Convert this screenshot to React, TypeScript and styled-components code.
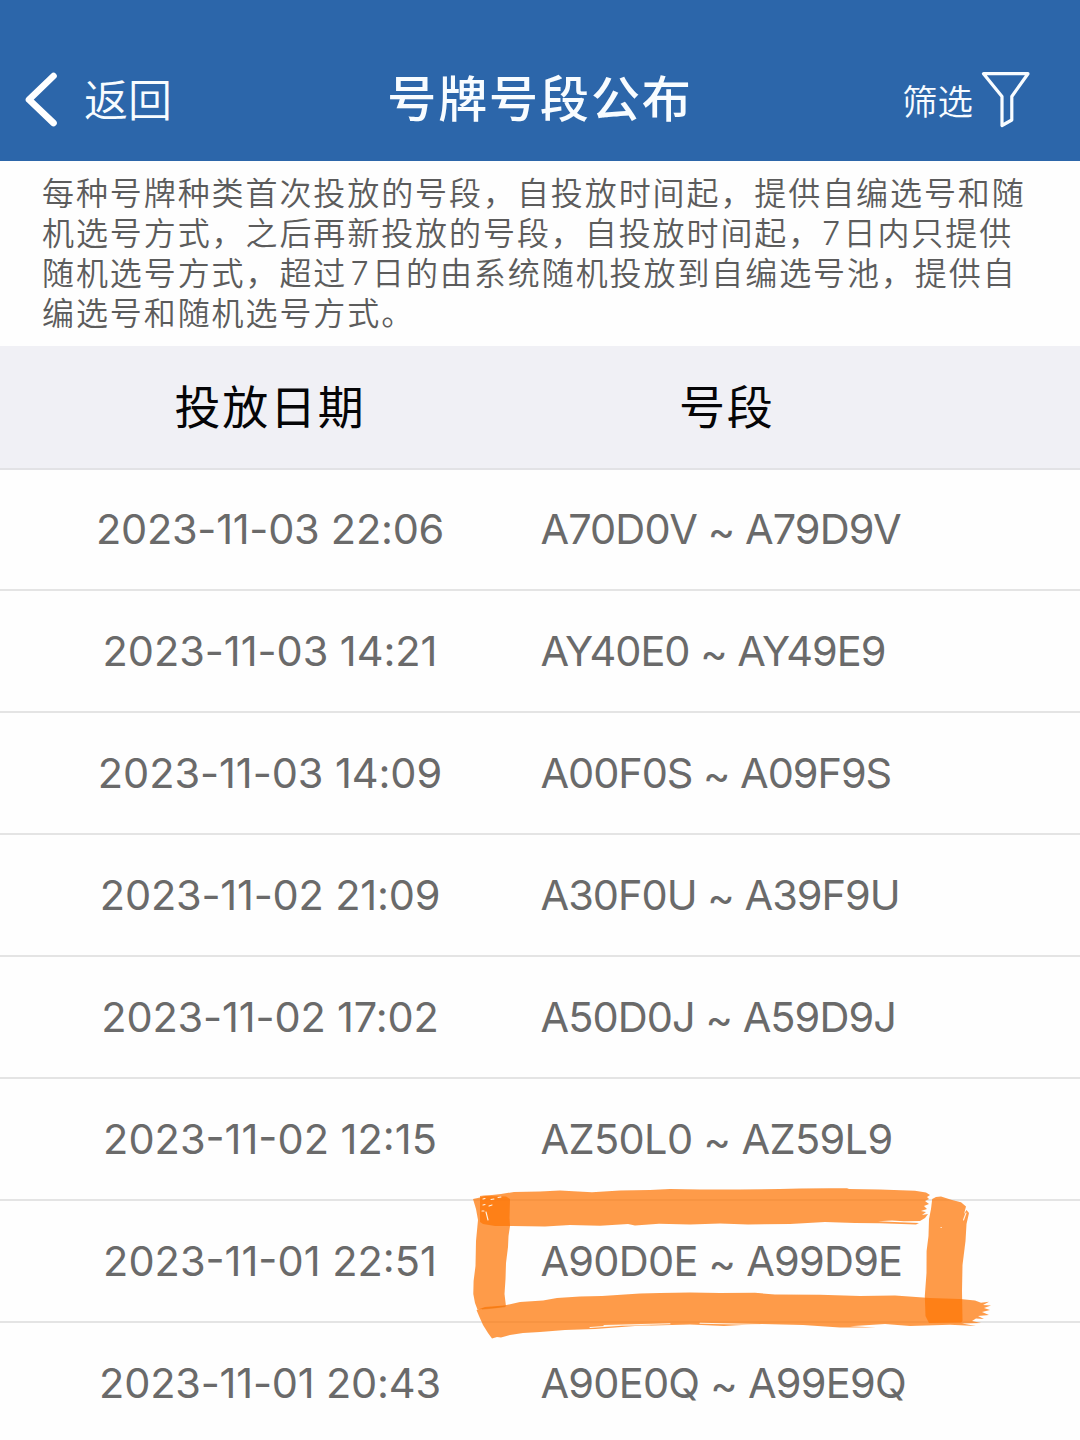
import React from 'react';
import styled, { createGlobalStyle } from 'styled-components';

const GlobalStyle = createGlobalStyle`
  * { box-sizing: border-box; }
  html, body { margin: 0; padding: 0; background: #fefefe; }
  body { font-family: Inter, "Noto Sans CJK SC", sans-serif; overflow: hidden; }
`;

const Screen = styled.main`
  width: 1080px;
  height: 1440px;
  display: flex;
  flex-direction: column;
  overflow: hidden;
  background: #fefefe;
`;

const NavBar = styled.header`
  flex: none;
  height: 161px;
  padding: 36px 49px 0 24px;
  display: grid;
  grid-template-columns: 1fr auto 1fr;
  align-items: center;
  background: #2c66aa;
  color: #f8fcff;
`;

const NavAction = styled.button<{ $end?: boolean; $size: number; $gap: number }>`
  display: flex;
  align-items: center;
  justify-content: ${(p) => (p.$end ? 'flex-end' : 'flex-start')};
  gap: ${(p) => p.$gap}px;
  padding: ${(p) => (p.$end ? '2px 0 0' : '0')};
  border: 0;
  background: none;
  color: inherit;
  font-family: "Noto Sans CJK SC", sans-serif;
  font-size: ${(p) => p.$size}px;
  font-weight: 350;
  line-height: 60px;
`;

const BackLabel = styled.span`
  padding-bottom: 2px;
`;

const Title = styled.h1`
  margin: 0 0 6px;
  padding-left: 25px;
  font-family: "Noto Sans CJK SC", sans-serif;
  font-size: 49px;
  font-weight: 500;
  letter-spacing: 1.9px;
  line-height: 70px;
`;

const Notice = styled.p`
  flex: none;
  height: 185px;
  margin: 0;
  padding: 13px 0 0 42px;
  color: #5c5c5c;
  font-size: 32px;
  font-weight: 350;
  letter-spacing: 1.92px;
  line-height: 40px;
  white-space: nowrap;
`;

const Numeral = styled.span<{ $before: number }>`
  margin: 0 1.5px 0 ${(p) => p.$before}px;
`;

const TableHead = styled.div`
  flex: none;
  height: 123.5px;
  padding-bottom: 6px;
  display: grid;
  grid-template-columns: 540px 1fr;
  align-items: center;
  border-bottom: 2px solid #e2e2e5;
  background: #f0f0f5;
`;

const HeadCell = styled.div<{ $code?: boolean }>`
  padding-left: ${(p) => (p.$code ? '139px' : '0')};
  text-align: ${(p) => (p.$code ? 'left' : 'center')};
  color: #050507;
  font-family: "Noto Sans CJK SC", sans-serif;
  font-size: 46px;
  letter-spacing: 1.7px;
  line-height: 70px;
`;

const Row = styled.div`
  position: relative;
  flex: none;
  height: 121.9px;
  display: grid;
  grid-template-columns: 540px 1fr;
  align-items: center;
  border-bottom: 2px solid #e4e4e4;
  color: #6a6a6a;
  font-size: 41.5px;
  line-height: 60px;
  white-space: pre;
`;

const DateCell = styled.div<{ $tracking: number }>`
  text-align: center;
  letter-spacing: ${(p) => p.$tracking}px;
`;

const CodeCell = styled.div<{ $tracking: number }>`
  padding-left: 0.5px;
  font-feature-settings: "calt" 0;
  letter-spacing: ${(p) => p.$tracking}px;
`;

const Tilde = styled.span`
  vertical-align: -2px;
  line-height: 1;
`;

const Marker = styled.svg`
  position: absolute;
  left: 460px;
  top: -30px;
  pointer-events: none;
`;

const rows = [
  { date: '2023-11-03 22:06', from: 'A70D0V', to: 'A79D9V', dt: -0.27, ct: -0.93 },
  { date: '2023-11-03 14:21', from: 'AY40E0', to: 'AY49E9', dt: -0.05, ct: -1 },
  { date: '2023-11-03 14:09', from: 'A00F0S', to: 'A09F9S', dt: -0.07, ct: -1.06 },
  { date: '2023-11-02 21:09', from: 'A30F0U', to: 'A39F9U', dt: -0.2, ct: -0.98 },
  { date: '2023-11-02 17:02', from: 'A50D0J', to: 'A59D9J', dt: -0.15, ct: -0.95 },
  { date: '2023-11-02 12:15', from: 'AZ50L0', to: 'AZ59L9', dt: 0, ct: -0.63 },
  { date: '2023-11-01 22:51', from: 'A90D0E', to: 'A99D9E', dt: 0, ct: -0.76, marked: true },
  { date: '2023-11-01 20:43', from: 'A90E0Q', to: 'A99E9Q', dt: -0.2, ct: -0.76 },
];

const BackIcon = () => (
  <svg width="34" height="56" viewBox="24 71 34 56" fill="none">
    <path d="M53.5 76 L29 99.7 L53.5 123" stroke="#fff" strokeWidth="6.6" strokeLinecap="round" strokeLinejoin="round" />
  </svg>
);

const FunnelIcon = () => (
  <svg width="50" height="60" viewBox="981 70 50 60" fill="none">
    <path d="M983.5 73.7 H1028 L1011.8 96.5 V120 L1002 125.5 V96.5 Z" stroke="#f8fcff" strokeWidth="3.2" strokeLinejoin="round" />
  </svg>
);

const BrushFrame = () => (
  <Marker width="560" height="180" viewBox="460 1170 560 180" fill="none">
    <g fill="rgb(253,118,6)" fillOpacity="0.73">
      <path d="M480 1195 L484 1194.5 L492 1194 L501 1193 L514 1191 L540 1190.5 L560 1189.5 L578 1190.5 L592 1191.3 L620 1189.5 L650 1189 L670 1188 L700 1188.5 L740 1188.5 L780 1188 L800 1187.5 L830 1187.3 L847 1187.2 L849 1188 L880 1188.6 L915 1189.8 L926 1191.5 L930 1194 L927 1196 L929 1198 L925 1200 L929 1203 L924 1205 L927 1208 L921 1210 L926 1211 L922 1214 L928 1213 L925 1217 L920 1220 L904 1220.2 L892 1219.5 L878 1220.2 L900 1221.3 L919 1222 L916 1223.4 L880 1222.2 L855 1222 L825 1221 L790 1223 L748 1223.5 L720 1222.5 L690 1223.5 L659 1222.8 L635 1224.5 L628 1223 L600 1224.8 L570 1224 L545 1225.5 L512 1225 L495 1225 L483 1223 L480 1221 Z" />
      <path d="M473 1198 L480 1196.5 L485 1195 L506 1195.5 L510 1198 L509.5 1217 L510 1225 L508.5 1235 L508 1246 L506 1262 L505.5 1278 L504.5 1293 L506 1305.5 L496 1307 L477.5 1308.5 L475 1302 L473.3 1293 L473.6 1280 L475.5 1265 L476 1240 L478 1219 L476 1208 Z" />
      <path d="M476.5 1309 L485 1306 L504 1304.5 L520 1301 L543 1299.5 L557 1297 L580 1295.5 L602 1295 L640 1292.5 L660 1292 L690 1291.5 L720 1292 L755 1291.8 L775 1293.5 L820 1293.8 L860 1295 L895 1294.5 L930 1297 L960 1298 L975 1299.5 L981 1301.8 L989 1300.8 L983 1304 L991 1304.5 L984 1307 L990 1309 L982 1311 L989 1314 L978 1315 L984 1318 L976 1317.5 L972 1320 L981 1322 L962 1322.5 L976 1325 L950 1323.8 L910 1325 L885 1323 L850 1325.2 L876 1326.5 L840 1326.5 L803 1324 L760 1323 L724 1325 L690 1323.5 L635 1325 L595 1328 L565 1329 L540 1331 L523 1332 L510 1334 L501 1336.5 L497 1336 L492 1337.5 L488 1332 L483 1324 L479 1315 Z" />
      <path d="M932.2 1198 L936 1196 L941 1195.5 L952 1199 L961 1201.2 L966 1205.5 L964 1213 L966.5 1209 L969 1212 L966.5 1223 L965.5 1240 L962.5 1264 L962 1290 L962.5 1320 L961 1321.5 L929 1322 L925.5 1315 L924.8 1295 L926.5 1272 L926.6 1250 L928.5 1235 L929 1218 L931 1208 Z" />
    </g>
    <g stroke="#fff4e8" strokeWidth="1.1" strokeLinecap="round">
      <path d="M483 1198 L485 1197.5 M491 1198.5 L494 1198 M498 1196.5 L501 1196 M483 1204 L485 1203.5 M486 1211 L488 1219 M489 1205 L492 1204 M482 1210 L484 1210 M963.5 1219 L966 1212" />
      <path d="M590 1326.5 L622 1324.3 L650 1323.8 M604 1324.5 L670 1322.7 M700 1322.2 L760 1323.5" />
      <path d="M941 1226.5 h.3" />
    </g>
    <g stroke="#e87914" strokeWidth="1.3" opacity=".4">
      <path d="M482 1308 L505 1305.5" />
    </g>
  </Marker>
);

export default function App() {
  return (
    <Screen>
      <GlobalStyle />
      <NavBar>
        <NavAction $size={44} $gap={26}>
          <BackIcon />
          <BackLabel>返回</BackLabel>
        </NavAction>
        <Title>号牌号段公布</Title>
        <NavAction $end $size={35.5} $gap={8}>
          筛选
          <FunnelIcon />
        </NavAction>
      </NavBar>
      <Notice>
        每种号牌种类首次投放的号段，自投放时间起，提供自编选号和随
        <br />
        机选号方式，之后再新投放的号段，自投放时间起，<Numeral $before={0}>7</Numeral>日内只提供
        <br />
        随机选号方式，超过<Numeral $before={3.5}>7</Numeral>日的由系统随机投放到自编选号池，提供自
        <br />
        编选号和随机选号方式。
      </Notice>
      <TableHead>
        <HeadCell>投放日期</HeadCell>
        <HeadCell $code>号段</HeadCell>
      </TableHead>
      {rows.map((row) => (
        <Row key={row.date}>
          <DateCell $tracking={row.dt}>{row.date}</DateCell>
          <CodeCell $tracking={row.ct}>
            {row.from} <Tilde>~</Tilde> {row.to}
          </CodeCell>
          {row.marked && <BrushFrame />}
        </Row>
      ))}
    </Screen>
  );
}
